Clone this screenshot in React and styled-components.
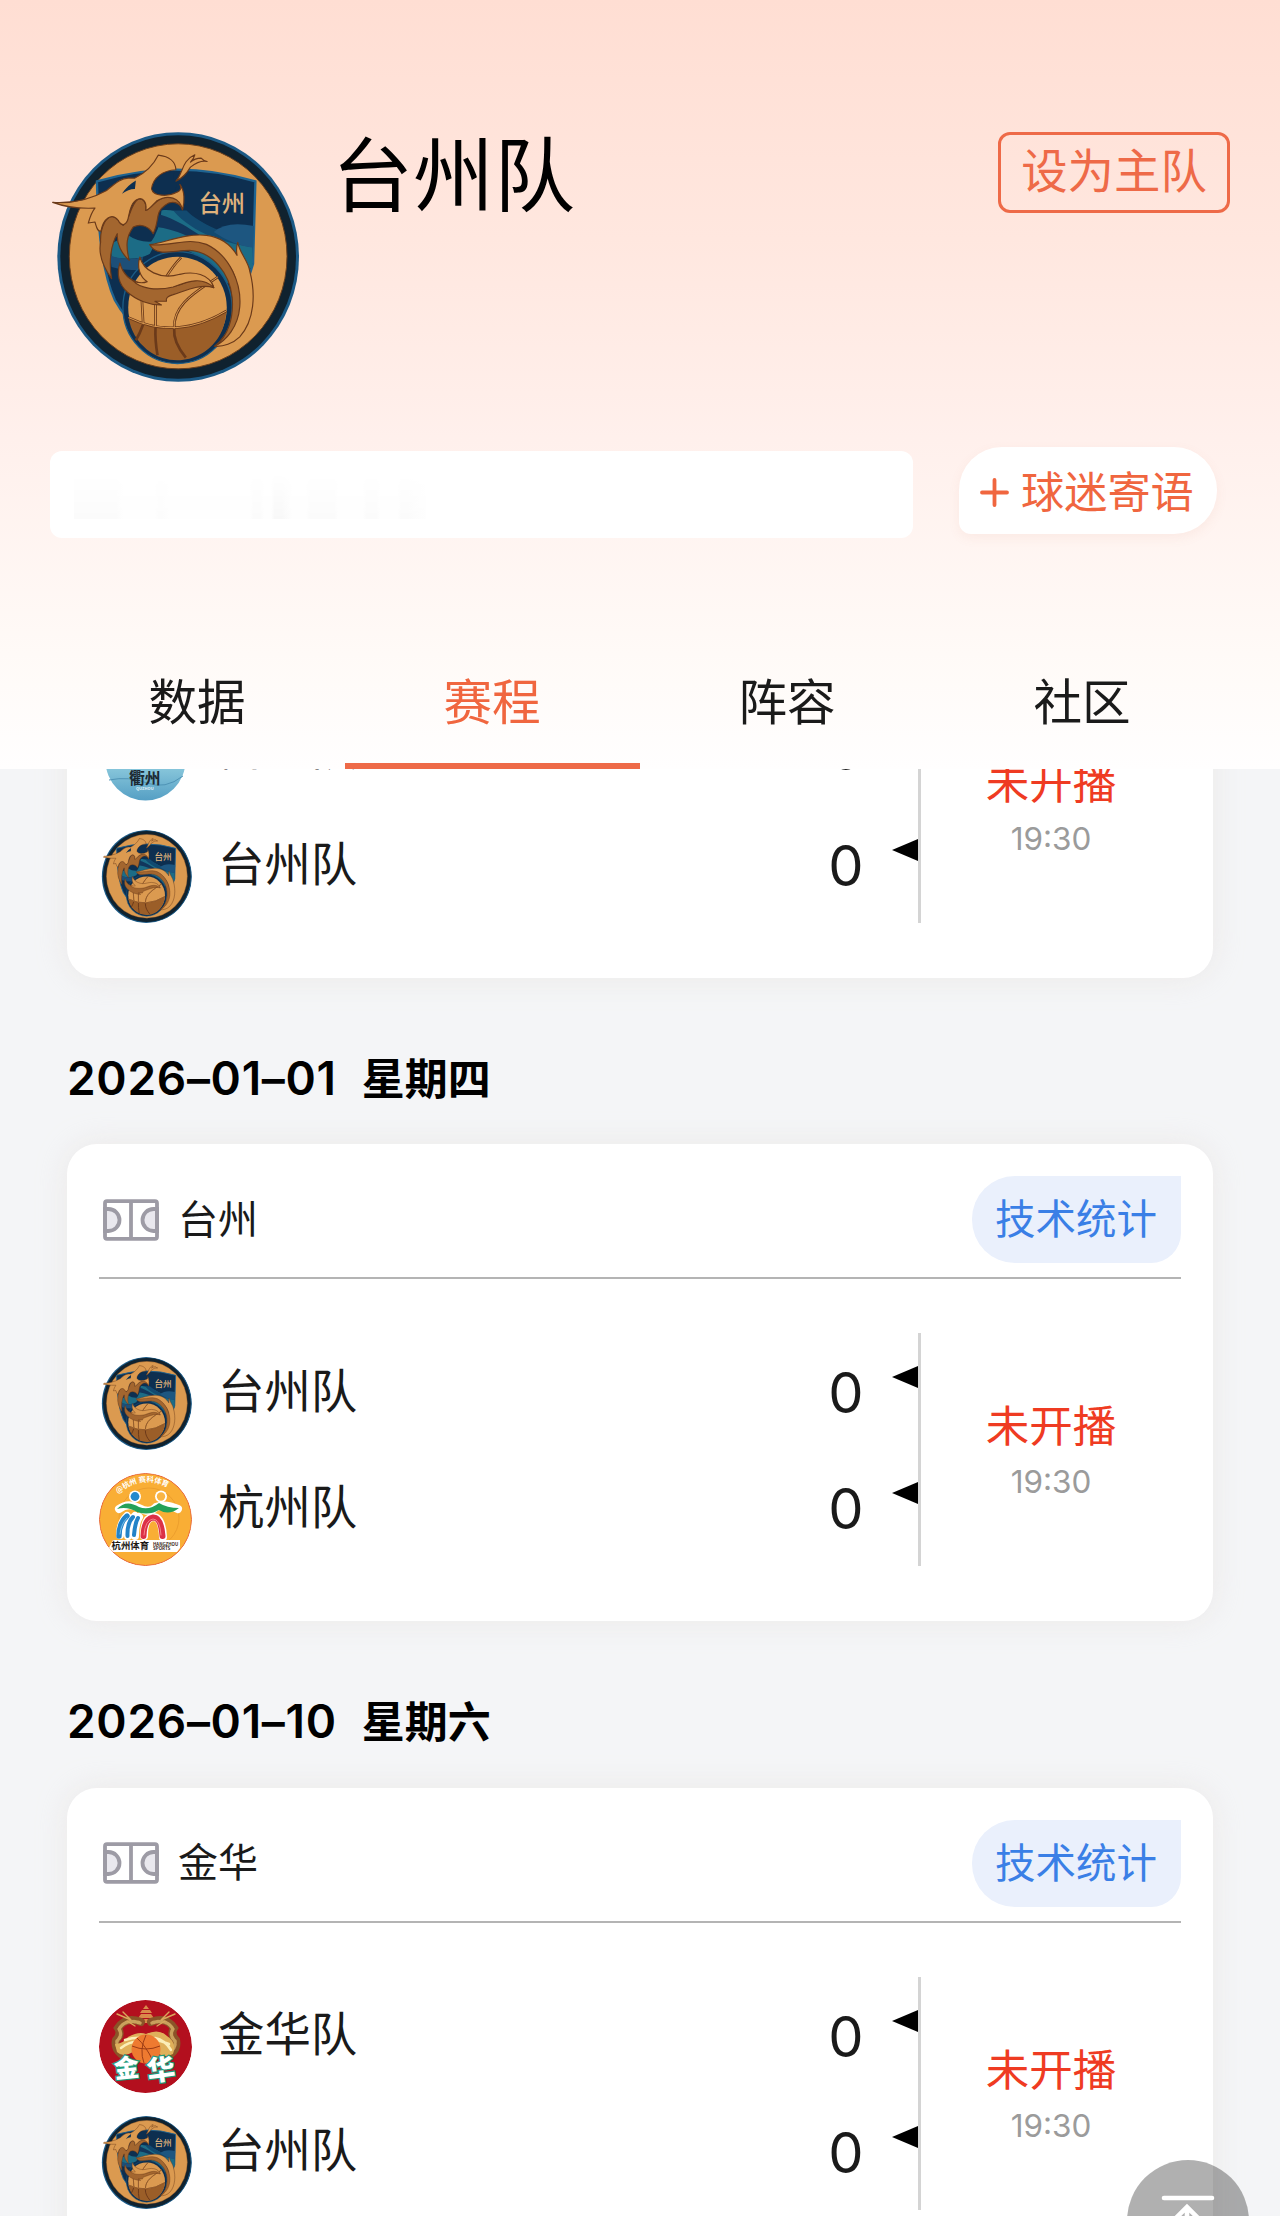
import styled, { createGlobalStyle } from 'styled-components';

const TABS = ['数据', '赛程', '阵容', '社区'];

const GAMES = [
  {
    id: 1,
    venue: '台州',
    status: '未开播',
    time: '19:30',
    teams: [
      { name: '衢州队', logo: 'quzhou', score: 0 },
      { name: '台州队', logo: 'taizhou', score: 0 },
    ],
  },
  {
    id: 2,
    date: '2026–01–01',
    weekday: '星期四',
    venue: '台州',
    status: '未开播',
    time: '19:30',
    teams: [
      { name: '台州队', logo: 'taizhou', score: 0 },
      { name: '杭州队', logo: 'hangzhou', score: 0 },
    ],
  },
  {
    id: 3,
    date: '2026–01–10',
    weekday: '星期六',
    venue: '金华',
    status: '未开播',
    time: '19:30',
    teams: [
      { name: '金华队', logo: 'jinhua', score: 0 },
      { name: '台州队', logo: 'taizhou', score: 0 },
    ],
  },
];

const TaizhouLogo = () => (
  <svg viewBox="30 65 748 750" width="100%" height="100%">
    <ellipse cx="415" cy="440" rx="363" ry="375" fill="#1c5a86" />
    <ellipse cx="415" cy="440" rx="354" ry="366" fill="#10222f" />
    <ellipse cx="415" cy="438" rx="327" ry="338" fill="#db9a50" stroke="#6b3f1c" strokeWidth="3" />
    {/* shield */}
    <path
      d="M171 213Q410 142 647 213L640 460Q600 620 430 700Q290 690 225 570Q175 460 171 213Z"
      fill="#0d2f50"
      stroke="#1f6491"
      strokeWidth="7"
    />
    <path d="M365 300C440 290 520 370 638 410L638 470L560 520Q480 400 330 400Q360 360 365 300Z" fill="#1c6c86" />
    <path d="M350 310C430 330 470 375 560 420L520 420Q430 360 350 350Z" fill="#12365c" />
    <path d="M440 300C480 340 560 375 640 385L640 410C560 400 460 370 400 300Z" fill="#124a70" />
    <path d="M522 365Q560 330 643 347L640 412Q580 405 522 365Z" fill="#1d5680" />
    <path d="M265 375Q300 400 350 392L330 430Q290 455 215 440L212 400Z" fill="#1c6c86" />
    <path d="M210 435Q260 455 310 440L300 480Q250 480 215 470Z" fill="#1d4f78" />
    {/* ball */}
    <ellipse cx="413" cy="592" rx="164" ry="168" fill="#0d2f50" stroke="#1b5c86" strokeWidth="4" />
    <ellipse cx="413" cy="592" rx="148" ry="153" fill="#db9a50" />
    <path d="M266 622Q410 692 560 602A148 153 0 0 1 266 622Z" fill="#9b5e28" />
    <g fill="none" stroke="#6b3a1a" strokeWidth="8">
      <path d="M266 622Q410 692 560 602M424 441Q400 465 376 505M534 500C470 545 400 580 403 655C400 690 420 720 438 742M306 570L310 642Q300 670 288 690M347 580L347 650Q345 690 353 735" />
    </g>
    <g fill="none" stroke="#db9a50" strokeWidth="3">
      <path d="M266 622Q410 692 560 602M424 441Q400 465 376 505M534 500C470 545 400 580 403 655M306 570L310 642M347 580L347 650" />
    </g>
    <g stroke="#6b3a1a" strokeWidth="3.5" strokeLinejoin="round">
      {/* tail */}
      <path
        d="M330 403C380 395 440 368 500 375C540 380 570 398 592 435Q588 415 594 396C600 430 625 450 630 482C648 550 645 630 600 680C580 700 550 710 525 708C570 670 600 600 590 520C580 450 500 390 420 405C380 420 345 425 330 403Z"
        fill="#db9a50"
      />
      <path
        d="M330 403C400 408 440 380 500 402C570 435 606 520 600 590C595 650 560 690 525 708C565 680 583 620 577 560C570 490 520 425 450 420C400 420 350 440 330 403Z"
        fill="#a3662f"
      />
      {/* flame over the ball */}
      <path
        d="M240 458C250 495 275 512 300 518C350 545 420 530 460 505C490 495 515 510 522 532C480 520 440 540 400 553Q375 560 380 573L345 573L365 584C330 585 290 570 262 545C235 520 230 490 240 458Z"
        fill="#a3662f"
      />
      <path
        d="M300 440C310 480 360 510 420 492C460 482 510 490 522 532C490 500 450 510 400 530C350 542 300 535 280 512C300 520 315 517 322 514C300 500 290 470 300 440Z"
        fill="#db9a50"
      />
      {/* jaw */}
      <path
        d="M428 298C420 275 395 268 375 285C345 305 360 330 340 370C325 345 300 340 280 350C262 375 255 400 268 450C245 430 230 400 232 370C215 400 205 450 215 505C190 470 175 430 182 395C180 350 200 315 220 318C240 320 235 340 250 345C270 330 270 285 295 266C315 262 320 285 318 300C340 290 350 262 380 260C412 256 432 275 428 298Z"
        fill="#a3662f"
      />
      {/* head */}
      <path
        d="M38 276C100 280 150 268 200 240C220 225 240 203 265 203L285 203C310 190 340 165 355 134C390 138 408 155 408 178C370 180 340 200 335 235C340 258 385 260 412 245C425 240 425 230 420 222C435 240 435 275 428 298C420 262 385 250 350 272C335 288 325 300 318 300C322 270 305 262 295 266C275 272 270 300 266 318C262 345 245 350 235 330C215 305 190 325 183 362C172 365 170 350 165 335L145 338C150 320 155 305 165 293C120 295 70 288 38 276Z"
        fill="#db9a50"
      />
      <path
        d="M408 212C430 190 425 150 465 133Q462 145 452 155Q465 143 484 143Q492 152 502 153Q480 148 452 170C440 190 425 205 408 212Z"
        fill="#db9a50"
      />
    </g>
    <path d="M246 250Q262 225 288 210L285 236Q268 235 246 250Z" fill="#0d2f50" />
    <path d="M345 215Q365 180 405 184Q392 205 410 218Q415 240 385 250Q345 255 336 235Z" fill="#0d2f50" />
    <ShieldText x="476" y="305" fontSize="70">
      台州
    </ShieldText>
  </svg>
);

const HangzhouLogo = () => (
  <svg viewBox="0 0 93 93" width="100%" height="100%">
    <circle cx="46.5" cy="46.5" r="46" fill="#f9ae35" stroke="#e8663c" />
    <circle cx="50" cy="45" r="30" fill="none" stroke="#e99a2c" strokeWidth="0.8" />
    <path id="hz-arc" d="M19 21Q46 -2 76 19" fill="none" />
    <LogoText fontSize="7.4" fill="#fff">
      <textPath href="#hz-arc">@杭州 赛科体育</textPath>
    </LogoText>
    <g fill="none" stroke="#fff" strokeLinecap="round" strokeLinejoin="round">
      <path d="M20 36Q29 29 40 35T57 34Q66 30 79 36" strokeWidth="8" />
      <path d="M21 62Q21 50 28 43M29 63Q29 50 36 43M36 63Q36 50 40 44M45 63Q45 45 54 44Q63 44 64 64" strokeWidth="8" />
    </g>
    <circle cx="36" cy="23.5" r="6" fill="#fff" />
    <circle cx="36" cy="23.5" r="4.4" fill="#2489ce" />
    <circle cx="62" cy="23.5" r="6" fill="#fff" />
    <circle cx="62" cy="23.5" r="4.2" fill="#f9b545" />
    <path d="M18 36Q27 26 40 34Q50 38 60 30Q68 35 80 35Q70 43 60 37Q50 43 38 39Q28 33 18 36Z" fill="#24a158" />
    <g fill="none" strokeLinecap="round">
      <path d="M20 63Q20 50 28 43" stroke="#2383c8" strokeWidth="5.4" />
      <path d="M28.5 63Q28 50 34 44M35 62Q36 50 39 45" stroke="#2383c8" strokeWidth="4" />
      <path d="M21 61Q22 51 28 45" stroke="#7cc0e8" strokeWidth="1" />
      <path d="M44.5 63Q45 46 54 44.5Q62 44 63.5 63" stroke="#dc3146" strokeWidth="6" />
      <path d="M45 62Q46 47 54 46Q61 46 62 62" stroke="#f4828a" strokeWidth="1" />
    </g>
    <path d="M14 67H81V75L78 79H14L10 75Z" fill="#fff" />
    <LogoText x="12.5" y="76.4" fontSize="9.4" fill="#1b1714">
      杭州体育
    </LogoText>
    <LogoText x="54" y="72.6" fontSize="4.4" fill="#3a2620">
      HANGZHOU
    </LogoText>
    <LogoText x="54" y="76.8" fontSize="4.4" fill="#3a2620">
      SPORTS
    </LogoText>
  </svg>
);

const JinhuaLogo = () => (
  <svg viewBox="0 0 93 93" width="100%" height="100%">
    <circle cx="46.5" cy="46.5" r="46.5" fill="#b30f1e" />
    {/* tower */}
    <path d="M47 5L50 9H44ZM43 10H51L53 13H41ZM42 14H52L55 18H39ZM44 19H50V23H44Z" fill="#d98a4a" />
    {/* dragons */}
    <g fill="none" strokeLinecap="round">
      <path d="M42 22Q27 16 19 28Q23 34 17 40Q15 48 22 54" stroke="#8a5428" strokeWidth="8" />
      <path d="M52 22Q67 16 75 28Q71 34 77 40Q79 48 72 54" stroke="#8a5428" strokeWidth="8" />
      <path d="M41 23Q27 18 20 29Q24 35 18 41Q17 48 24 53" stroke="#c9a05c" strokeWidth="3.4" strokeDasharray="2.4 1.6" />
      <path d="M53 23Q67 18 74 29Q70 35 76 41Q77 48 70 53" stroke="#c9a05c" strokeWidth="3.4" strokeDasharray="2.4 1.6" />
      <path d="M18 14L32 20L24 12M76 14L62 20L70 12M28 21L36 26M66 21L58 26" stroke="#d9a85c" strokeWidth="1.4" />
    </g>
    <path d="M16 44Q24 44 29 37Q40 31 47 34Q60 28 68 36Q78 42 74 54Q66 58 60 54L34 52Q24 58 18 52Z" fill="#dfb05a" />
    <path d="M26 40Q44 34 70 44M22 48Q32 40 44 42M72 50Q66 40 56 38" fill="none" stroke="#fbeeb8" strokeWidth="2.5" strokeLinecap="round" />
    <circle cx="47" cy="49" r="14.5" fill="#ee7a30" />
    <path d="M33 46Q47 52 61 46M47 35Q40 50 45 63M38 38Q47 46 54 61" fill="none" stroke="#9a3c16" strokeWidth="1" />
    <Brush x="15" y="77" fontSize="25" transform="rotate(-6 28 68)">
      金
    </Brush>
    <Brush x="48" y="80" fontSize="28" transform="rotate(-8 62 70)">
      华
    </Brush>
  </svg>
);

const QuzhouLogo = () => (
  <svg viewBox="0 0 93 93" width="100%" height="100%">
    <defs>
      <linearGradient id="qz-sea" x1="0" y1="0" x2="0" y2="1">
        <stop offset="0.5" stopColor="#93cfe0" />
        <stop offset="1" stopColor="#559fc4" />
      </linearGradient>
    </defs>
    <circle cx="46.5" cy="46.5" r="40" fill="url(#qz-sea)" />
    <path d="M10 66Q30 62 48 69T84 62" fill="none" stroke="#4f93b5" strokeWidth="1" />
    <LogoText x="30" y="70" fontSize="15.8" fill="#1c2a33">
      衢州
    </LogoText>
    <LogoText x="37" y="76" fontSize="4" fill="#e3f3f8">
      QUZHOU
    </LogoText>
  </svg>
);

const LOGOS = {
  taizhou: TaizhouLogo,
  hangzhou: HangzhouLogo,
  jinhua: JinhuaLogo,
  quzhou: QuzhouLogo,
};

const CourtIcon = () => (
  <svg width="56" height="42" viewBox="0 0 56 42" fill="none" stroke="#9d9ba5" strokeWidth="3.8">
    <path d="M2 10H5.5A11 11 0 0 1 5.5 32H2Z" fill="#e9e8ee" />
    <path d="M54 10H50.5A11 11 0 0 0 50.5 32H54Z" fill="#e9e8ee" />
    <rect x="2" y="2.2" width="52" height="37.6" rx="2" />
    <path d="M28 2V40" />
  </svg>
);

const TeamRow = ({ team }) => {
  const Logo = LOGOS[team.logo];
  return (
    <Team>
      <TeamLogo>
        <Logo />
      </TeamLogo>
      <TeamName>{team.name}</TeamName>
      <Score>{team.score}</Score>
      <Marker />
    </Team>
  );
};

const GameCard = ({ game }) => (
  <Card>
    <CardHead>
      <CourtIcon />
      <Venue>{game.venue}</Venue>
      <StatsButton>技术统计</StatsButton>
    </CardHead>
    <CardBody>
      <Teams>
        {game.teams.map((team) => (
          <TeamRow key={team.name} team={team} />
        ))}
      </Teams>
      <StatusColumn>
        <Status>{game.status}</Status>
        <Time>{game.time}</Time>
      </StatusColumn>
    </CardBody>
  </Card>
);

const App = () => (
  <Page>
    <GlobalStyle />
    <Header>
      <Profile>
        <ProfileLogo>
          <TaizhouLogo />
        </ProfileLogo>
        <TeamTitle>台州队</TeamTitle>
        <HomeTeamButton>设为主队</HomeTeamButton>
      </Profile>
      <MessageRow>
        <MessageBox>
          <FadedMessage />
        </MessageBox>
        <MessageButton>
          <svg width="29" height="29" viewBox="0 0 29 29" stroke="#f0663f" strokeWidth="3.8" strokeLinecap="round">
            <path d="M2 14.5H27M14.5 2V27" />
          </svg>
          球迷寄语
        </MessageButton>
      </MessageRow>
      <TabBar>
        {TABS.map((tab) => (
          <Tab key={tab} $active={tab === '赛程'}>
            {tab}
          </Tab>
        ))}
      </TabBar>
    </Header>
    <Schedule>
      <Games>
        {GAMES.map((game) => (
          <section key={game.id}>
            {game.date && (
              <DateHeading>
                {game.date}
                <Weekday>{game.weekday}</Weekday>
              </DateHeading>
            )}
            <GameCard game={game} />
          </section>
        ))}
      </Games>
    </Schedule>
    <BackToTop>
      <svg width="54" height="60" viewBox="0 0 54 60" fill="none" stroke="#fff" strokeWidth="4.6" strokeLinecap="round">
        <path d="M3 3H51M26 12V56M8 30L26 12L44 30" />
      </svg>
    </BackToTop>
  </Page>
);

export default App;

const GlobalStyle = createGlobalStyle`
  * {
    box-sizing: border-box;
  }
  body {
    margin: 0;
    background: #f4f5f7;
    font-family: Inter, 'Noto Sans CJK SC', sans-serif;
    color: #1a1a1a;
  }
  svg {
    display: block;
    flex: none;
  }
`;

const Page = styled.div`
  position: relative;
  display: flex;
  flex-direction: column;
  width: 1280px;
  height: 2216px;
  overflow: hidden;
`;

const Header = styled.header`
  flex: none;
  display: flex;
  flex-direction: column;
  height: 769px;
  padding: 132px 50px 0;
  background: linear-gradient(#ffded3, #ffe7df 31%, #fff0ec 57%, #fffaf7 85%, #fffefe);
`;

const Profile = styled.div`
  display: flex;
  align-items: flex-start;
  height: 250px;
`;

const ProfileLogo = styled.div`
  width: 249px;
  height: 250px;
`;

const TeamTitle = styled.h1`
  flex: 1;
  margin: 0 0 0 33px;
  font-size: 81px;
  font-weight: 400;
  line-height: 88px;
  color: #000;
`;

const HomeTeamButton = styled.button`
  width: 232px;
  height: 81px;
  padding: 0 0 4px;
  border: 3px solid #ee6a48;
  border-radius: 12px;
  background: none;
  font-family: inherit;
  font-size: 46.4px;
  line-height: 70px;
  color: #ee6a48;
`;

const MessageRow = styled.div`
  display: flex;
  justify-content: space-between;
  height: 91px;
  margin-top: 65px;
  padding-right: 13px;
`;

const MessageBox = styled.div`
  align-self: flex-end;
  width: 863px;
  height: 87px;
  padding: 22px 24px;
  border-radius: 12px;
  background: #fff;
`;

/* last message fading out */
const FadedMessage = styled.div`
  width: 352px;
  height: 46px;
  background: linear-gradient(
    90deg,
    #fbfbfb 0 12%,
    #fefefe 14% 23%,
    #fcfcfc 24% 25%,
    #fefefe 27% 50%,
    #fbfbfb 51% 53%,
    #fefefe 54% 56%,
    #f8f8f8 57% 59%,
    #fefefe 62% 66%,
    #fbfbfb 67% 74%,
    #fefefe 75% 82%,
    #fbfbfb 83% 86%,
    #fefefe 87% 92%,
    #fbfbfb 93% 95%,
    #fefefe
  );
  mask-image: linear-gradient(transparent, #000);
`;

const MessageButton = styled.button`
  display: flex;
  align-items: center;
  gap: 12px;
  width: 258px;
  height: 87px;
  padding: 3px 0 0 21px;
  border: 0;
  border-radius: 43px 43px 43px 12px;
  background: #fff;
  box-shadow: 0 4px 12px rgba(200, 120, 90, 0.08);
  font-family: inherit;
  font-size: 43.2px;
  line-height: 60px;
  color: #f0663f;
`;

const TabBar = styled.nav`
  display: flex;
  margin-top: auto;
`;

const Tab = styled.a`
  flex: 1;
  height: 134px;
  padding: 7px 1px 0 0;
  border-bottom: 6px solid ${({ $active }) => ($active ? '#ee6a48' : 'transparent')};
  font-size: 48.6px;
  line-height: 121px;
  text-align: center;
  color: ${({ $active }) => ($active ? '#f0663f' : '#1a1a1a')};
`;

const Schedule = styled.main`
  flex: 1;
  min-height: 0;
  overflow: hidden;
  padding: 0 67px;
`;

/* the list is scrolled up under the header */
const Games = styled.div`
  margin-top: -268px;
`;

const DateHeading = styled.h2`
  display: flex;
  height: 166.4px;
  margin: 0;
  padding-top: 35px;
  font-size: 46px;
  font-weight: 600;
  letter-spacing: 0.7px;
  line-height: 130px;
  color: #000;
`;

const Weekday = styled.span`
  margin: 1px 0 0 25px;
  font-size: 43px;
  letter-spacing: 0;
`;

const Card = styled.article`
  height: 477px;
  padding: 0 32px;
  border-radius: 30px;
  background: #fff;
  box-shadow: 0 0 30px rgba(225, 218, 210, 0.4);
`;

const CardHead = styled.div`
  display: flex;
  align-items: center;
  height: 135px;
  padding: 18px 0 0 4px;
  border-bottom: 2px solid #b4b4b4;
`;

const Venue = styled.span`
  flex: 1;
  margin-left: 19px;
  font-size: 40px;
  line-height: 60px;
`;

const StatsButton = styled.button`
  width: 209px;
  height: 87px;
  padding: 1px 1px 0 0;
  border: 0;
  border-radius: 43px 0 30px 43px;
  background: #eaf0fc;
  font-family: inherit;
  font-size: 40.5px;
  line-height: 60px;
  color: #3a7fe6;
`;

const CardBody = styled.div`
  display: flex;
  margin-top: 54px;
`;

const Teams = styled.div`
  width: 822px;
  height: 233px;
  border-right: 3px solid #d4d4d4;
`;

const Team = styled.div`
  display: flex;
  align-items: center;
  height: 116px;
`;

const TeamLogo = styled.div`
  width: 93px;
  height: 93px;
  margin-top: 24px;
  border-radius: 50%;
  overflow: hidden;
`;

const TeamName = styled.span`
  flex: 1;
  margin: 0 0 1px 26px;
  font-size: 46.4px;
  line-height: 60px;
`;

const Score = styled.span`
  width: 56px;
  margin: 4px 18px 0 0;
  font-size: 56px;
  line-height: 60px;
  text-align: center;
`;

const Marker = styled.i`
  margin: -28px 0 0 0;
  border: solid transparent;
  border-width: 11.5px 26px 11.5px 0;
  border-right-color: #000;
`;

const StatusColumn = styled.div`
  flex: 1;
  display: flex;
  flex-direction: column;
  align-items: center;
  padding: 63px 0 0 0;
`;

const Status = styled.span`
  font-size: 43.5px;
  line-height: 60px;
  color: #ef3b22;
`;

const Time = styled.span`
  margin-top: 6px;
  font-size: 31.5px;
  font-weight: 400;
  line-height: 40px;
  color: #9b9b9b;
`;

const BackToTop = styled.button`
  position: absolute;
  right: 31px;
  bottom: -66px;
  display: flex;
  justify-content: center;
  width: 122px;
  height: 122px;
  padding: 35px 0 0;
  border: 0;
  border-radius: 50%;
  background: rgba(0, 0, 0, 0.31);
`;

const LogoText = styled.text`
  font-family: 'Noto Sans CJK SC', sans-serif;
  font-weight: 700;
`;

const ShieldText = styled.text`
  font-family: 'Noto Sans CJK SC', sans-serif;
  font-weight: 500;
  fill: #dfb27c;
`;

const Brush = styled.text`
  font-family: 'Noto Sans CJK SC', sans-serif;
  font-weight: 900;
  fill: #fff;
  stroke: #1f9a7c;
  stroke-width: 2.4px;
  paint-order: stroke;
`;
